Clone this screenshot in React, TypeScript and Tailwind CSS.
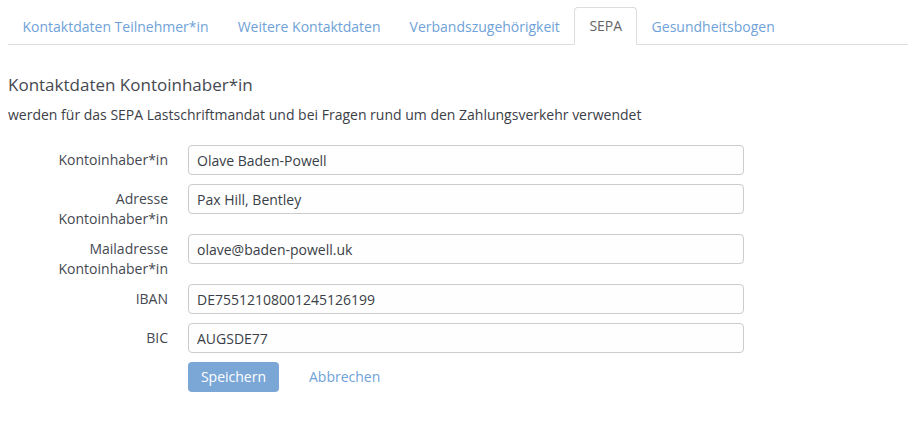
import React from 'react';

const tabs = ['Kontaktdaten Teilnehmer*in', 'Weitere Kontaktdaten', 'Verbandszugehörigkeit', 'SEPA', 'Gesundheitsbogen'];

const fields = [
  { label: ['Kontoinhaber*in'], value: 'Olave Baden-Powell' },
  { label: ['Adresse', 'Kontoinhaber*in'], value: 'Pax Hill, Bentley' },
  { label: ['Mailadresse', 'Kontoinhaber*in'], value: 'olave@baden-powell.uk' },
  { label: ['IBAN'], value: 'DE75512108001245126199' },
  { label: ['BIC'], value: 'AUGSDE77' },
];

export default function App() {
  return (
    <div className="min-h-screen bg-white text-[#454951] text-[14px] leading-[20px]" style={{ fontFamily: '"Open Sans", "Liberation Sans", sans-serif' }}>
      {/* tabs */}
      <div className="pt-[7px] pl-[8px]">
        <ul className="flex border-b border-[#dddddd]">
          {tabs.map((t) => {
            const active = t === 'SEPA';
            return (
              <li key={t} className="-mb-px">
                <a
                  className={
                    active
                      ? 'block h-[38px] px-[14px] pt-[8px] border border-[#dddddd] border-b-white rounded-t-[4px] bg-white text-[#666666]'
                      : 'block h-[38px] px-[13.5px] pt-[9px] border border-transparent text-[#6fa2d8]'
                  }
                >
                  {t}
                </a>
              </li>
            );
          })}
        </ul>
      </div>

      <div className="px-[8px]">
        <h3 className="mt-[28px] text-[17px] leading-[24px] text-[#454951]">Kontaktdaten Kontoinhaber*in</h3>
        <p className="mt-[8px] text-[#3c4048]">werden für das SEPA Lastschriftmandat und bei Fragen rund um den Zahlungsverkehr verwendet</p>

        <form className="mt-[20px]">
          {fields.map((f) => (
            <div key={f.value} className="flex gap-[20px]">
              <label className="w-[160px] py-[5px] text-right text-[#454951]">
                {f.label.map((l) => (
                  <div key={l}>{l}</div>
                ))}
              </label>
              <div className="mb-[9px]">
                <input
                  readOnly
                  value={f.value}
                  className="w-[556px] h-[30px] px-[8px] border border-[#cccccc] rounded-[4px] bg-[#fefefe] text-[#3a3e47] outline-none"
                />
              </div>
            </div>
          ))}
          <div className="flex items-center gap-[30px] pl-[180px]">
            <button type="button" className="w-[91px] h-[30px] rounded-[4px] bg-[#7ba7d7] text-white">
              Speichern
            </button>
            <a className="text-[#6fa2d8]">Abbrechen</a>
          </div>
        </form>
      </div>
    </div>
  );
}
